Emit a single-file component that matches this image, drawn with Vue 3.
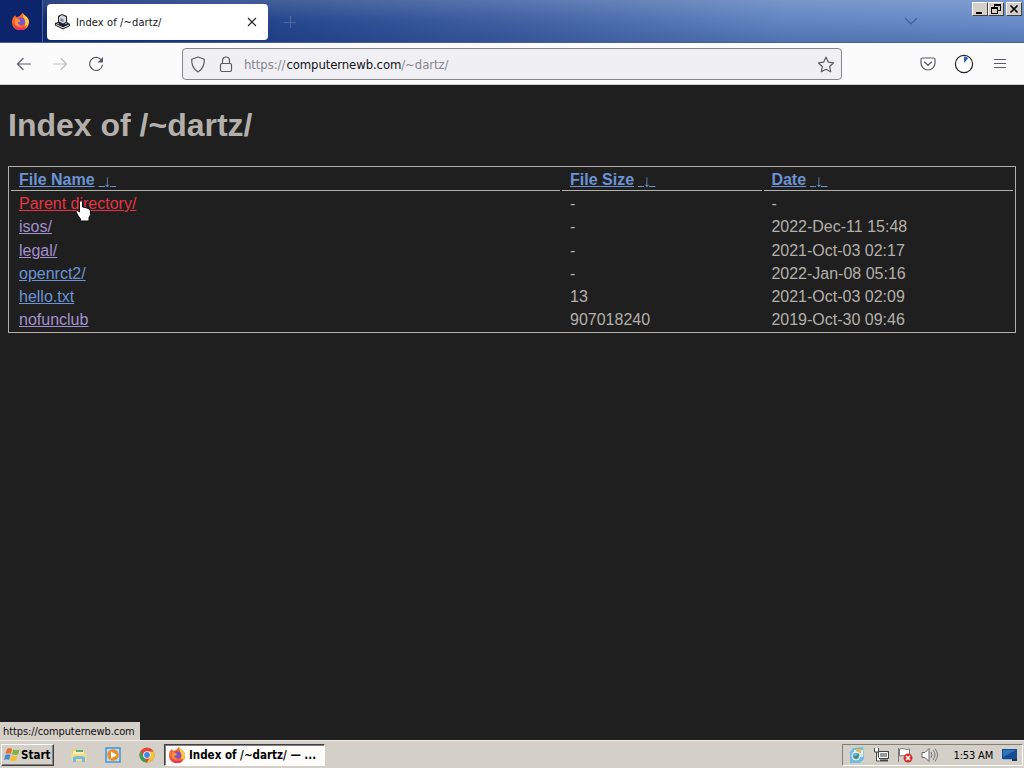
<template>
  <div class="screen">
    <header class="titlebar">
      <div class="ff-button"><FirefoxLogo :size="17" /></div>
      <div class="tab">
        <svg class="favicon" width="17" height="17" viewBox="0 0 17 17">
          <path d="M4 3l4-2 5 2v6l3 2v2l-7 3.500-8-4v-2.500l3-1z" fill="#20222b" />
          <path d="M5 4l3-2 4 2v5L9 10.500 5 8.500z" fill="#d8d8dc" />
          <path d="M6.500 5l3 1.500v2.500l-3-1z" fill="#6b7fa8" />
          <path d="M2 11.500l7 3.300 6-2.800" stroke="#e8e8e8" fill="none" />
          <path d="M3 10l2 1M11 11l2-1" stroke="#bbb" fill="none" />
        </svg>
        <span class="tab-title">Index of /~dartz/</span>
        <svg class="tab-close" width="10" height="10" viewBox="0 0 10 10">
          <path d="M1 1l8 8M9 1L1 9" stroke="#222" stroke-width="1.200" />
        </svg>
      </div>
      <svg class="new-tab" width="12" height="12" viewBox="0 0 12 12">
        <path d="M6.500 0v12M0 6.500h12" stroke="#50699f" />
      </svg>
      <svg class="all-tabs" width="14" height="9" viewBox="0 0 14 9">
        <path d="M1 1l6 6 6-6" fill="none" stroke="#3f5f9f" stroke-width="1.200" />
      </svg>
      <div class="window-buttons">
        <span class="win-btn"><svg width="14" height="12"><path d="M3 9h6v2H3z" /></svg></span>
        <span class="win-btn"><svg width="14" height="12">
          <path d="M5 1h7v7H9V7h2V3H6v1H5zM2 4h7v7H2zM3 6v4h5V6z" fill-rule="evenodd" />
        </svg></span>
        <span class="win-btn close"><svg width="14" height="12">
          <path d="M3.500 2.500l7 7M10.500 2.500l-7 7" stroke="#000" stroke-width="1.700" />
        </svg></span>
      </div>
    </header>

    <nav class="toolbar">
      <svg class="nav-icon back" width="16" height="16" viewBox="0 0 16 16">
        <path d="M14.500 8H1.500M7 2.500L1.500 8 7 13.500" />
      </svg>
      <svg class="nav-icon forward" width="16" height="16" viewBox="0 0 16 16">
        <path d="M1.500 8h13M9 2.500L14.500 8 9 13.500" />
      </svg>
      <svg class="nav-icon reload" width="16" height="16" viewBox="0 0 16 16">
        <path d="M13.600 4.500A6.500 6.500 0 1 0 14.500 9" />
        <path d="M15 1v5.500H9.500z" fill="#5b5b66" stroke="none" />
      </svg>
      <div class="urlbar">
        <svg class="nav-icon shield" width="16" height="17" viewBox="0 0 16 17">
          <path d="M8 1l6.300 2.300c.3 6-1.800 10-6.300 12.700C3.500 13.300 1.400 9.300 1.700 3.300z" />
        </svg>
        <svg class="nav-icon lock" width="14" height="17" viewBox="0 0 14 17">
          <rect x="1.500" y="7.500" width="11" height="8" rx="1.500" />
          <path d="M3.500 7.500v-3a3.500 3.500 0 0 1 7 0v3" />
        </svg>
        <span class="url">https://<b>computernewb.com</b>/~dartz/</span>
        <svg class="nav-icon star" width="18" height="17" viewBox="0 0 18 17">
          <path d="M9 1.200l2.300 4.900 5.300.7-3.900 3.700 1 5.300L9 13.200l-4.700 2.600 1-5.300-3.900-3.700 5.300-.7z" />
        </svg>
      </div>
      <svg class="nav-icon pocket" width="16" height="14" viewBox="0 0 16 14">
        <path d="M2.500 1h11a1.500 1.500 0 0 1 1.500 1.500V6A7 7 0 0 1 1 6V2.500A1.500 1.500 0 0 1 2.500 1z" />
        <path d="M4.500 5L8 8.300 11.500 5" />
      </svg>
      <svg class="extension" width="20" height="20" viewBox="0 0 20 20">
        <circle cx="10" cy="10" r="8.600" fill="#fff" stroke="#20242c" stroke-width="1.200" />
        <path d="M10 9V2.500a7 7 0 0 1 4.300 1.800z" fill="#2d5fb5" />
      </svg>
      <svg class="nav-icon menu" width="14" height="12" viewBox="0 0 14 12">
        <path d="M1.500 1.500h11M1.500 5.500h11M1.500 9.500h11" />
      </svg>
    </nav>

    <main class="page">
      <h1>Index of /~dartz/</h1>
      <div class="listing">
        <div class="row head">
          <div v-for="title in columns" :key="title" class="cell">
            <a>{{ title }}</a><a class="sort">&nbsp;<span class="arrow">↓</span>&nbsp;</a>
          </div>
        </div>
        <div v-for="file in files" :key="file.name" class="row">
          <div class="cell"><a :class="file.state">{{ file.name }}</a></div>
          <div class="cell">{{ file.size }}</div>
          <div class="cell">{{ file.date }}</div>
        </div>
      </div>
      <div class="status">https://computernewb.com</div>
      <svg class="cursor" width="17" height="22" viewBox="0 0 17 22">
        <path d="M4.500 1.500q1.500-1.500 3 0V7l2.500.5 2 .5 2 1 1.500 1.700v4l-1.500 3V21h-8.500v-2L3 15.500l-2-3.500q0-2 2-1.200l1.500 1.200z" fill="#fff" stroke="#111" />
      </svg>
    </main>

    <footer class="taskbar">
      <div class="start">
        <svg width="17" height="16" viewBox="0 0 17 16">
          <path d="M3 2q3-2 5 0L6.800 7q-2-1.500-5.300-.2z" fill="#ef6b32" />
          <path d="M9 2.500q3 1.500 6.500 0L14 7.500q-3 1.200-6-.2z" fill="#79b53c" />
          <path d="M1.300 8q3-1.500 5.200.2L5 13q-2-1.500-5 0z" fill="#4389d2" />
          <path d="M7.500 8.500q3 1.500 6 .2L12 13.500q-3 1.200-6-.2z" fill="#f6bd29" />
        </svg>
        <b>Start</b>
      </div>
      <svg class="quick folder" width="16" height="16" viewBox="0 0 16 16">
        <path d="M1 2h5l1 2h7v9H1z" fill="#e6ce72" />
        <path d="M2 4h11v4H2z" fill="#f9edb2" />
        <path d="M5 3h7v2H5z" fill="#5eae7a" />
        <path d="M0 7h16l-1 7H1z" fill="#f3dc8b" />
        <path d="M2 15v-5q6-2 12 0v5h-3v-3H5v3z" fill="#72bbdc" />
      </svg>
      <svg class="quick" width="16" height="16" viewBox="0 0 16 16">
        <path d="M1 1h14v14H1z" fill="#b7d9f2" stroke="#4b92ce" stroke-width="1.500" />
        <circle cx="8" cy="8" r="5.700" fill="#ef8b20" />
        <path d="M6 4.500v7L12 8z" fill="#fff" />
      </svg>
      <svg class="quick" width="16" height="16" viewBox="0 0 16 16">
        <circle cx="8" cy="8" r="7.500" fill="#e34435" />
        <path d="M1.500 4.200l4 7L8 15.500A7.500 7.500 0 0 1 1.500 4.200z" fill="#35a354" />
        <path d="M8 4.500h6.600A7.500 7.500 0 0 1 8 15.500l3.500-5.800z" fill="#f5c52d" />
        <circle cx="8" cy="8" r="3.800" fill="#fff" />
        <circle cx="8" cy="8" r="2.900" fill="#4286e6" />
      </svg>
      <div class="task"><FirefoxLogo :size="16" /><b>Index of /~dartz/ — ...</b></div>
      <div class="tray">
        <svg width="16" height="16" viewBox="0 0 16 16">
          <path d="M4 1l10-1 1 12-4 4H1V5z" fill="#78b9de" />
          <path d="M5 3h9v7H5z" fill="#d5edf4" />
          <path d="M7 2h5v4H7z" fill="#e5bd4b" />
          <circle cx="7" cy="9" r="4" fill="#69b2d9" stroke="#f5faff" />
          <path d="M5 9l2 2 3-4" fill="none" stroke="#398a65" stroke-width="1.500" />
        </svg>
        <svg width="17" height="16" viewBox="0 0 17 16">
          <path d="M5.500 4.500h10v7h-10z" fill="#999" stroke="#444" />
          <path d="M6.500 5.500h8v5h-8z" fill="none" stroke="#fff" />
          <path d="M7 13.500h8" stroke="#444" stroke-width="2" />
          <path d="M1.500 1v4h4V1M3.500 5v9h3" fill="#fff" stroke="#444" />
        </svg>
        <svg width="16" height="16" viewBox="0 0 16 16">
          <path d="M1.500 1v14" stroke="#777" />
          <path d="M2.500 2q3-1 5 0t5 0v7q-3 1-5 0t-5 0z" fill="#fff" stroke="#777" />
          <circle cx="11" cy="11" r="4.500" fill="#d9302c" />
          <path d="M9 9l4 4M13 9l-4 4" stroke="#fff" stroke-width="1.500" />
        </svg>
        <svg width="18" height="16" viewBox="0 0 18 16">
          <path d="M1 5.500h3l4-4v13l-4-4H1z" fill="#fff" stroke="#666" />
          <path d="M10 5q2 3 0 6M12 3q4 5 0 10M14 1.500q5 6.500 0 13" fill="none" stroke="#777" />
        </svg>
        <span class="clock">1:53 AM</span>
        <svg class="show-desktop" width="16" height="14" viewBox="0 0 16 14">
          <path d="M0 1h15v10H0z" fill="#174c91" />
          <path d="M1 2h13L1 9z" fill="#2d75bd" />
          <path d="M1 11.500h9" stroke="#8fb5da" />
          <path d="M10 12h5" stroke="#20324a" stroke-width="2" />
        </svg>
      </div>
    </footer>
  </div>
</template>

<script setup>
import { h } from 'vue'

const columns = ['File Name', 'File Size', 'Date']

const files = [
  { name: 'Parent directory/', size: '-', date: '-', state: 'active' },
  { name: 'isos/', size: '-', date: '2022-Dec-11 15:48', state: 'visited' },
  { name: 'legal/', size: '-', date: '2021-Oct-03 02:17', state: 'visited' },
  { name: 'openrct2/', size: '-', date: '2022-Jan-08 05:16', state: '' },
  { name: 'hello.txt', size: '13', date: '2021-Oct-03 02:09', state: '' },
  { name: 'nofunclub', size: '907018240', date: '2019-Oct-30 09:46', state: 'visited' }
]

const FirefoxLogo = (props) => h('svg', { width: props.size, height: props.size, viewBox: '0 0 16 16' }, [
  h('path', { d: 'M1 4l2-2 1 2 3-1 3-3q1 2 3 3 3 2 3 6a8 7.500 0 0 1-16 0Q0 6 1 4z', fill: '#f9652d' }),
  h('path', { d: 'M10 0q1 2 3 3 3 2 3 6-1 4-5 6 3-5 0-10z', fill: '#ffca38' }),
  h('path', { d: 'M1 9q2 5 7 5 4 0 6-3-1 5-6 5Q2 16 1 9z', fill: '#e92e66' }),
  h('circle', { cx: 8.5, cy: 8, r: 3.8, fill: '#8054c7' }),
  h('path', { d: 'M3 5l4 1 1 2-3 1q1 3 4 2-4 3-6-1z', fill: '#ff933b' })
])
FirefoxLogo.props = ['size']
</script>

<style>
body {
  margin: 0;
  overflow: hidden;
}
</style>

<style scoped>
.screen {
  width: 1024px;
  height: 768px;
  display: flex;
  flex-direction: column;
  overflow: hidden;
  font-family: "DejaVu Sans Condensed", "DejaVu Sans", sans-serif;
  font-stretch: condensed;
}
svg {
  display: block;
  flex: none;
}
.titlebar {
  height: 43px;
  flex: none;
  display: flex;
  align-items: center;
  background:
    linear-gradient(180deg, rgba(255, 255, 255, .14), transparent 50%, rgba(10, 36, 106, .2)),
    linear-gradient(90deg, #0a246a 0, #25468c 27%, #4262a4 52%, #6286c2 77%, #698dc8 100%);
  box-sizing: border-box;
  border-bottom: 1px solid #4a5f8c;
}
.ff-button {
  width: 43px;
  height: 42px;
  box-sizing: border-box;
  padding: 13px 0 0 12px;
  border-right: 1px solid #4b619b;
  background: #0b246c;
}
.tab {
  width: 221px;
  height: 36px;
  margin: 1px 0 0 4px;
  display: flex;
  align-items: center;
  box-sizing: border-box;
  padding: 0 11px 0 7px;
  border-radius: 4px;
  background: #fff;
  color: #15141a;
}
.tab-title {
  margin: 2px 0 0 5px;
  flex: 1;
  font-size: 11px;
  letter-spacing: .12px;
}
.new-tab {
  margin: 1px 0 0 16px;
}
.all-tabs {
  margin-left: auto;
  margin-right: 54px;
}
.window-buttons {
  display: flex;
  align-self: flex-start;
  padding: 2px 2px 0 0;
}
.win-btn {
  width: 16px;
  height: 14px;
  box-sizing: border-box;
  border: 1px solid;
  border-color: #fff #404040 #404040 #fff;
  background: #d4d0c8;
}
.win-btn.close {
  margin-left: 2px;
}
.toolbar {
  height: 42px;
  flex: none;
  display: flex;
  align-items: center;
  box-sizing: border-box;
  padding: 1px 17px 0 16px;
  background: #fbfbfc;
  border-bottom: 1px solid #cccccf;
}
.nav-icon {
  fill: none;
  stroke: #5b5b66;
  stroke-width: 1.2;
  stroke-linecap: round;
  stroke-linejoin: round;
}
.forward {
  margin-left: 20px;
  stroke: #c0c0c5;
}
.reload {
  margin-left: 20px;
}
.urlbar {
  width: 660px;
  height: 32px;
  display: flex;
  align-items: center;
  box-sizing: border-box;
  margin-left: 78px;
  padding: 0 6px 0 7px;
  border: 1px solid #85858c;
  border-radius: 4px;
  background: #f0f0f4;
}
.lock {
  margin-left: 13px;
}
.url {
  flex: 1;
  margin-left: 11px;
  font-size: 13px;
  letter-spacing: -.07px;
  color: #86868c;
}
.url b {
  font-weight: 400;
  letter-spacing: -.1px;
  margin-left: 1px;
  color: #15141a;
}
.pocket {
  margin-left: 78px;
}
.extension {
  margin-left: 18px;
}
.menu {
  margin-left: auto;
}
.page {
  flex: 1;
  position: relative;
  box-sizing: border-box;
  padding: 22px 8px 0;
  background: #1f1f1f;
  color: #b3b0ab;
  font: 16px/18px "Liberation Sans", Arial, sans-serif;
}
h1 {
  margin: 0 0 22px;
  font-size: 32px;
  line-height: 37px;
}
.listing {
  height: 167px;
  box-sizing: border-box;
  padding: 1px 2px;
  border: 1px solid #b3b0ab;
}
.row {
  height: 23.2px;
  display: grid;
  grid-template-columns: 549px 200px 1fr;
  column-gap: 2px;
}
.row:nth-child(4) .cell {
  padding-top: 4px;
}
.cell {
  box-sizing: border-box;
  padding: 3px 8px 0;
}
.cell:nth-child(3) {
  padding-left: 7.4px;
}
.head {
  height: 23px;
  margin-bottom: 1px;
  font-weight: 700;
}
.head .cell {
  border-bottom: 1px solid #b3b0ab;
}
a {
  color: #6c93d4;
  text-decoration: underline;
}
.sort {
  margin-left: 4px;
  font-weight: 400;
}
.arrow {
  font-size: 17px;
  line-height: 1;
  vertical-align: -2px;
}
.visited {
  color: #a390cf;
}
.active {
  color: #e83444;
}
.status {
  position: absolute;
  left: 0;
  bottom: 0;
  width: 140px;
  height: 18px;
  box-sizing: border-box;
  padding-left: 3px;
  background: #d4d0c8;
  color: #111;
  font: 11px/20px "DejaVu Sans Condensed", "DejaVu Sans", sans-serif;
  letter-spacing: -.1px;
}
.cursor {
  position: absolute;
  left: 75px;
  top: 115px;
}
.taskbar {
  height: 28px;
  flex: none;
  display: flex;
  align-items: center;
  box-sizing: border-box;
  padding: 1px 0 0 1px;
  border-top: 1px solid #f1efeb;
  background: #d4d0c8;
  color: #000;
  font-size: 11px;
}
.taskbar b {
  font-size: 11.5px;
}
.start {
  width: 53px;
  height: 22px;
  display: flex;
  align-items: center;
  box-sizing: border-box;
  padding-left: 2px;
  border: 1px solid;
  border-color: #fff #404040 #404040 #fff;
  box-shadow: inset -1px -1px #808080;
}
.quick {
  margin-left: 18px;
}
.quick.folder {
  margin-left: 17px;
}
.task {
  width: 161px;
  height: 22px;
  display: flex;
  align-items: center;
  box-sizing: border-box;
  margin-left: 9px;
  padding-left: 4px;
  border: 1px solid;
  border-color: #404040 #fff #fff #404040;
  box-shadow: inset 1px 1px #808080;
  background: #fdfcfa;
}
.task b {
  margin-left: 4px;
  white-space: nowrap;
}
.tray {
  width: 181px;
  height: 22px;
  display: flex;
  align-items: center;
  gap: 8px;
  box-sizing: border-box;
  margin-left: auto;
  margin-right: 1px;
  padding-left: 6px;
  border: 1px solid;
  border-color: #808080 #fff #fff #808080;
}
.tray svg:nth-child(n + 2) {
  margin-left: -.5px;
}
.tray .clock {
  width: 41px;
  margin-left: 7px;
  white-space: nowrap;
  letter-spacing: -.15px;
}
.tray .show-desktop {
  margin-left: 2px;
}
</style>
